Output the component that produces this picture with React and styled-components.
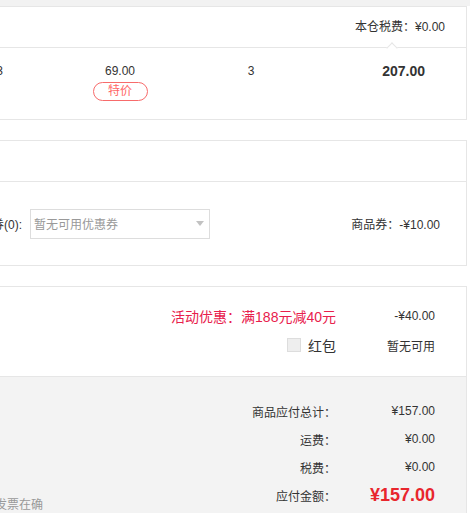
import React from 'react';
import styled, { createGlobalStyle } from 'styled-components';

const Global = createGlobalStyle`
  html, body { margin: 0; padding: 0; overflow: hidden; background: #fff; }
  body {
    font-family: "Liberation Sans", "Noto Sans CJK SC", sans-serif;
    font-size: 12px;
    color: #333;
  }
  * { box-sizing: border-box; }
`;

const TopBand = styled.div`
  height: 6px;
  background: #f2f2f2;
`;

const Page = styled.div`
  width: 667px;
  margin-left: -200px;
`;

const Panel = styled.section`
  border: 1px solid #e6e6e6;
  border-bottom: ${(p) => (p.$joined ? '1px solid #e6e6e6' : '1px solid #e6e6e6')};
  background: #fff;
  margin-bottom: ${(p) => (p.$joined ? '0' : '20px')};
`;

const PanelHeader = styled.div`
  position: relative;
  height: 41px;
  border-bottom: 1px solid #e6e6e6;
  display: flex;
  align-items: center;
  justify-content: ${(p) => (p.$end ? 'flex-end' : 'flex-start')};
  padding: 0 21px 0 20px;
  line-height: 16px;
`;

const Caret = styled.span`
  position: absolute;
  right: 70px;
  bottom: -5px;
  width: 8px;
  height: 8px;
  background: #fff;
  border-top: 1px solid #e6e6e6;
  border-left: 1px solid #e6e6e6;
  transform: rotate(45deg);
  z-index: 1;
`;

const ProductRow = styled.div`
  display: flex;
  align-items: flex-start;
  height: 71px;
  padding-top: 15px;
  line-height: 16px;
`;

const Cell = styled.div`
  flex: ${(p) => (p.$w ? `0 0 ${p.$w}px` : '1 1 auto')};
  text-align: ${(p) => p.$align || 'center'};
  padding-right: ${(p) => p.$pr || 0}px;
  display: flex;
  flex-direction: column;
  align-items: ${(p) => (p.$align === 'right' ? 'flex-end' : 'center')};
`;

const Total = styled.span`
  font-size: 14px;
  font-weight: bold;
  color: #333;
`;

const Badge = styled.span`
  margin-top: 3px;
  width: 55px;
  height: 19px;
  border: 1px solid #f76b6b;
  border-radius: 10px;
  color: #f66;
  font-size: 12px;
  line-height: 17px;
  text-align: center;
`;

const CouponBody = styled.div`
  height: 83px;
  display: flex;
  align-items: center;
  padding-right: 26px;
`;

const CouponLabel = styled.span`
  flex: 0 0 221px;
  text-align: right;
`;

const Select = styled.div`
  margin-left: 8px;
  width: 180px;
  height: 30px;
  border: 1px solid #ddd;
  display: flex;
  align-items: center;
  justify-content: space-between;
  padding: 0 5px 0 3px;
  color: #999;
`;

const Arrow = styled.span`
  width: 0;
  height: 0;
  border-left: 4px solid transparent;
  border-right: 4px solid transparent;
  border-top: 5px solid #c2c2c2;
`;

const Spacer = styled.div`
  flex: 1;
`;

const DiscountBody = styled.div`
  padding: 19px 31px 21px 0;
  display: flex;
  flex-direction: column;
  gap: 9px;
`;

const LineRow = styled.div`
  display: flex;
  justify-content: flex-end;
  align-items: center;
  height: ${(p) => p.$h || 20}px;
`;

const Label = styled.span`
  display: flex;
  align-items: center;
  justify-content: flex-end;
  font-size: ${(p) => p.$size || 12}px;
  color: ${(p) => p.$color || '#333'};
`;

const Value = styled.span`
  flex: 0 0 99px;
  text-align: right;
  font-size: ${(p) => p.$size || 12}px;
  font-weight: ${(p) => (p.$bold ? 'bold' : 'normal')};
  color: ${(p) => p.$color || '#333'};
`;

const Check = styled.span`
  width: 14px;
  height: 14px;
  background: #eee;
  border: 1px solid #ddd;
  margin-right: 7px;
  margin-top: -1px;
`;

const Summary = styled.div`
  display: flex;
  background: #f3f3f3;
  border: 1px solid #e6e6e6;
  border-top: none;
  height: 160px;
`;

const Note = styled.p`
  margin: 0 0 0 98px;
  padding-top: 120px;
  width: 145px;
  color: #999;
  font-size: 12px;
  line-height: 16px;
`;

const Totals = styled.div`
  flex: 1;
  padding: 20px 31px 0 0;
  display: flex;
  flex-direction: column;
`;

export default function App() {
  return (
    <>
      <Global />
      <TopBand />
      <Page>
        <Panel>
          <PanelHeader $end>
            本仓税费：¥0.00
            <Caret />
          </PanelHeader>
          <ProductRow>
            <Cell $w={254} $align="right" $pr={52}>型号：A-3</Cell>
            <Cell $w={130}>
              <span>69.00</span>
              <Badge>特价</Badge>
            </Cell>
            <Cell $w={132}>3</Cell>
            <Cell $align="right" $pr={41}>
              <Total>207.00</Total>
            </Cell>
          </ProductRow>
        </Panel>

        <Panel>
          <PanelHeader>使用优惠</PanelHeader>
          <CouponBody>
            <CouponLabel>优惠券(0):</CouponLabel>
            <Select>
              <span>暂无可用优惠券</span>
              <Arrow />
            </Select>
            <Spacer />
            <span>商品券：-¥10.00</span>
          </CouponBody>
        </Panel>

        <Panel $joined>
          <DiscountBody>
            <LineRow>
              <Label $size={14} $color="#e8204c">活动优惠：满188元减40元</Label>
              <Value>-¥40.00</Value>
            </LineRow>
            <LineRow>
              <Label $size={14}>
                <Check />
                红包
              </Label>
              <Value>暂无可用</Value>
            </LineRow>
          </DiscountBody>
        </Panel>

        <Summary>
          <Note>温馨提示：本单的发票在确认收货后开具</Note>
          <Totals>
            <LineRow $h={28}>
              <Label>商品应付总计：</Label>
              <Value>¥157.00</Value>
            </LineRow>
            <LineRow $h={28}>
              <Label>运费：</Label>
              <Value>¥0.00</Value>
            </LineRow>
            <LineRow $h={28}>
              <Label>税费：</Label>
              <Value>¥0.00</Value>
            </LineRow>
            <LineRow $h={28}>
              <Label>应付金额：</Label>
              <Value $size={18} $bold $color="#e8262d">¥157.00</Value>
            </LineRow>
          </Totals>
        </Summary>
      </Page>
    </>
  );
}
